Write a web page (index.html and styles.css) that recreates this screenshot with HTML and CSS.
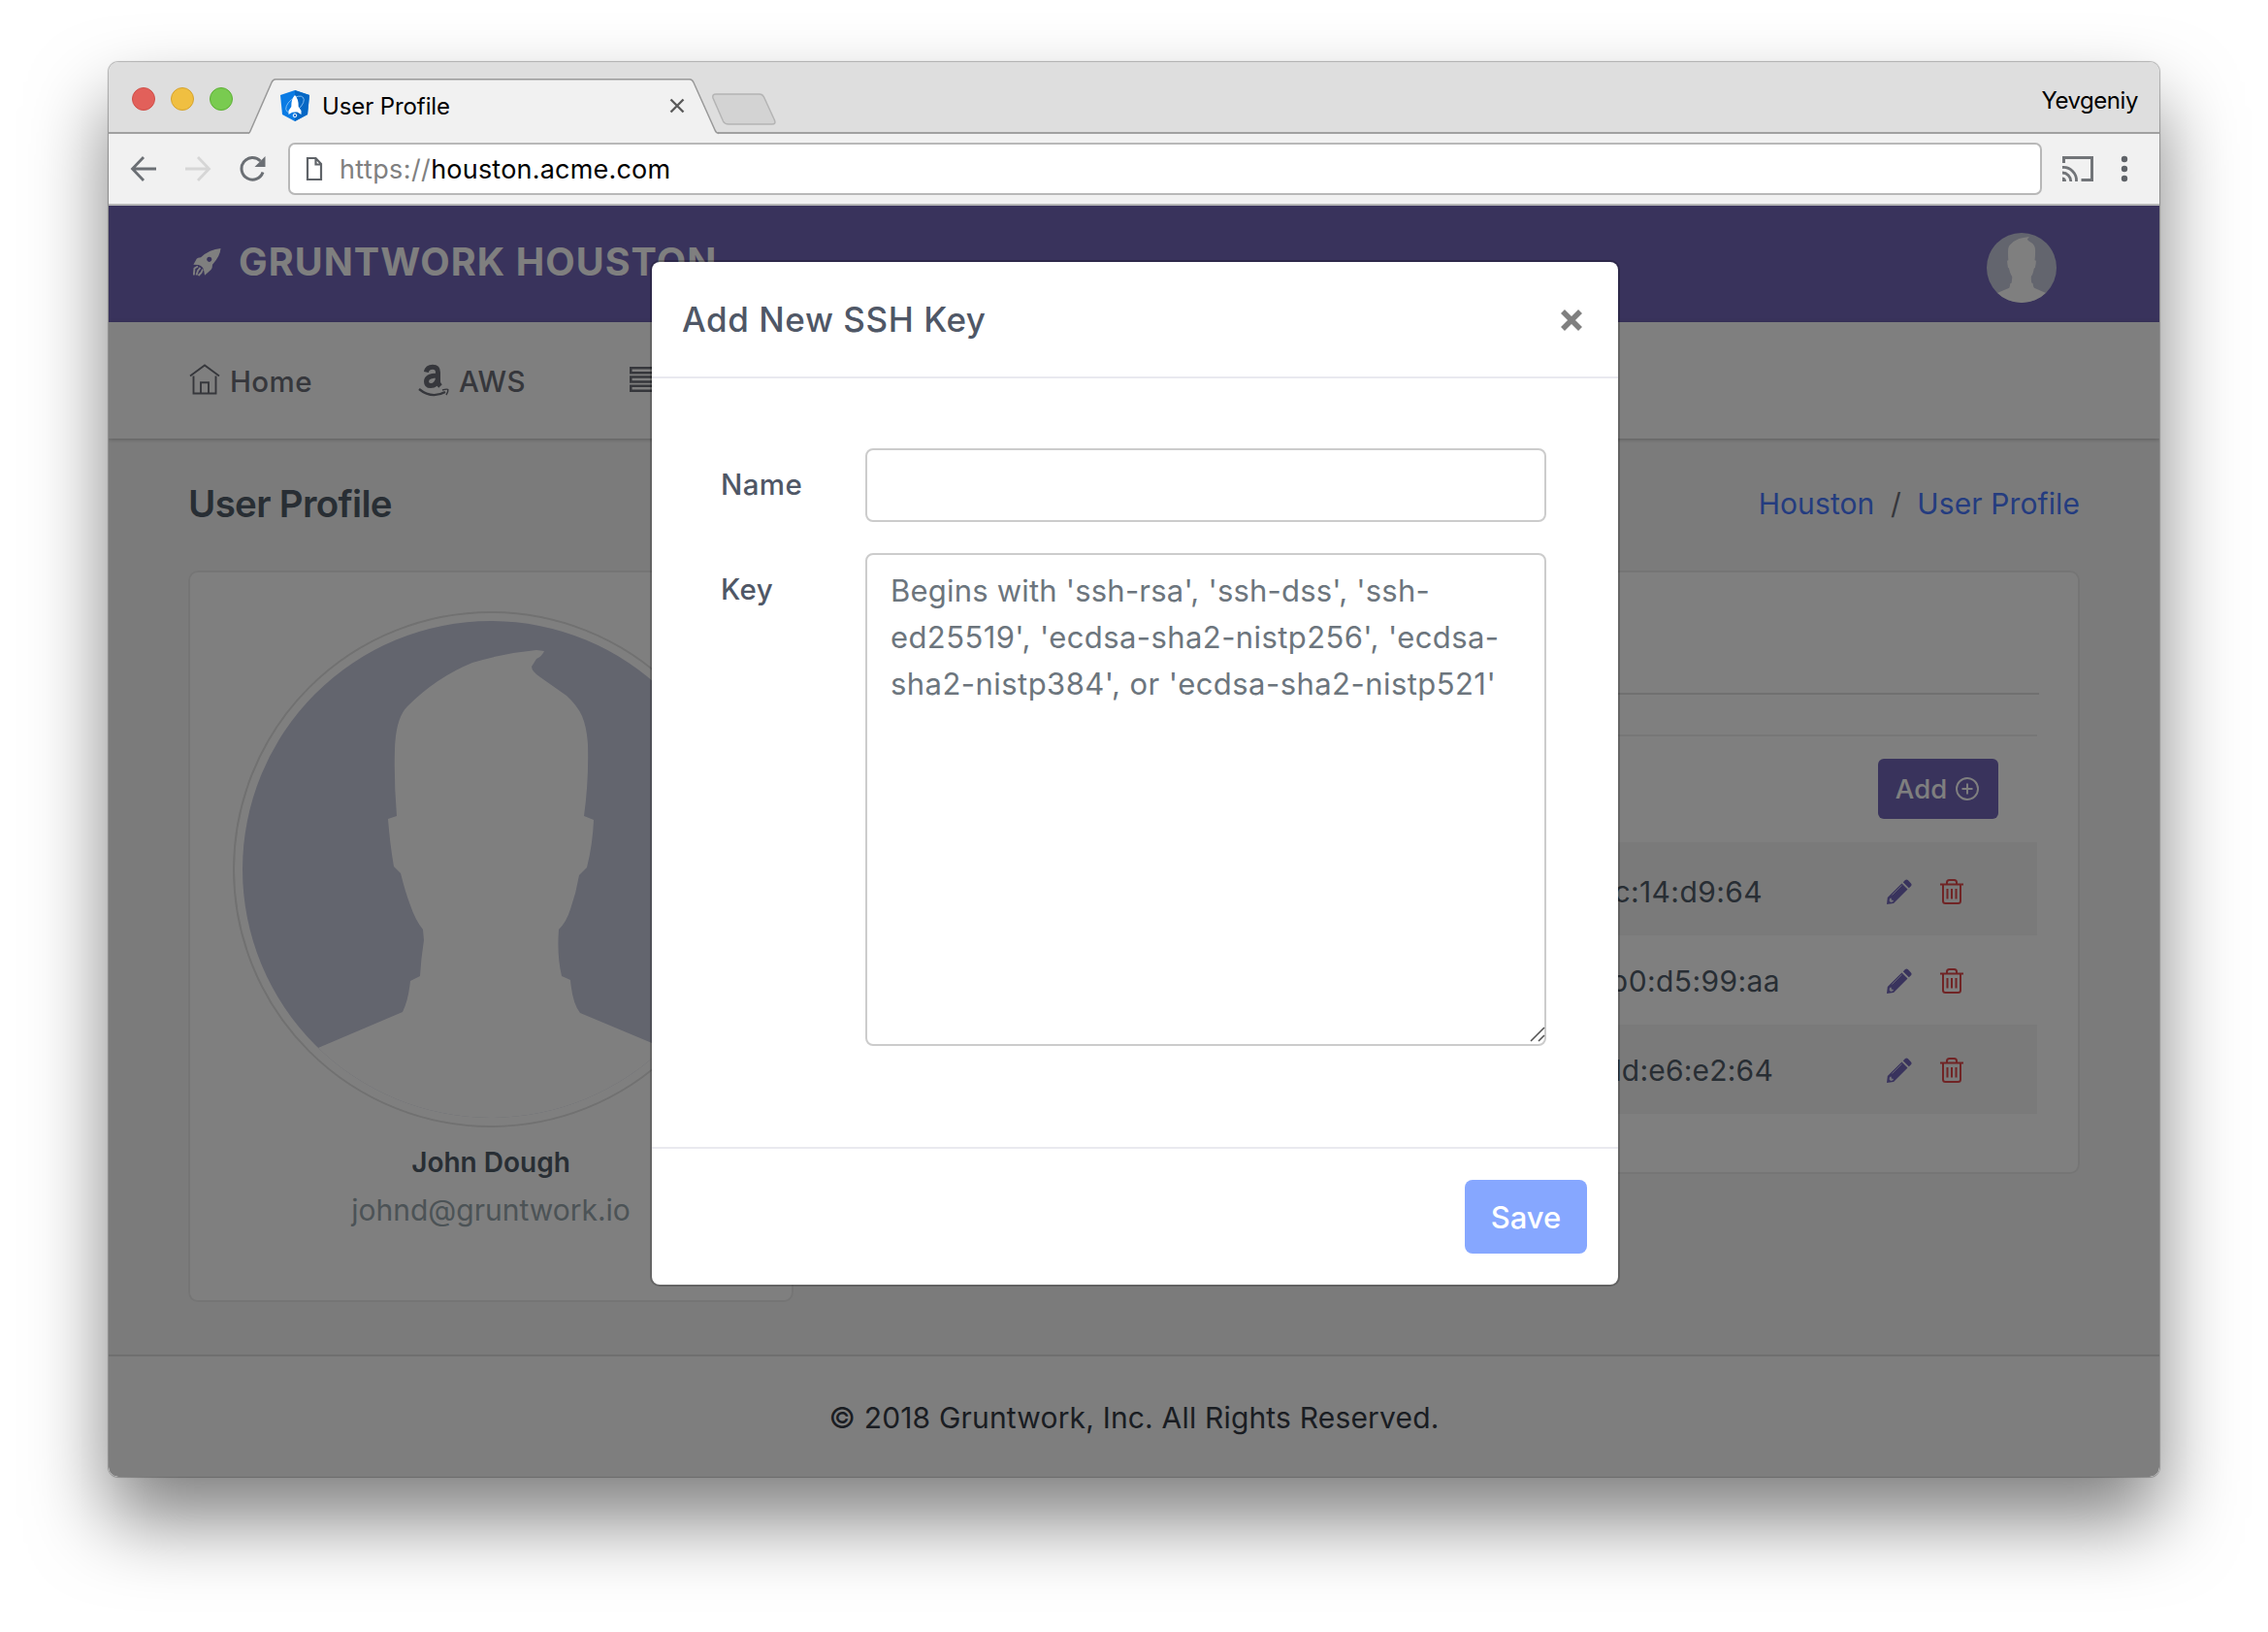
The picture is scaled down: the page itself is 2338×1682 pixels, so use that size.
FILE: index.html
```html
<!DOCTYPE html>
<html lang="en">
<head>
<meta charset="utf-8">
<title>User Profile</title>
<link rel="stylesheet" href="styles.css">
</head>
<body>
<svg class="defs" width="0" height="0" aria-hidden="true">
  <symbol id="person" viewBox="0 0 512 512">
    <rect width="512" height="512" fill="#c7cadd"/>
    <path fill="#fff" d="M303 30 L311 31 Q309 36 303 39 L298 47 Q298 52 307 58 L334 77 Q345 87 350 98 Q355 110 356 128 Q357 165 352 201 L362 205 Q361 230 355 254 L347 262 Q344 280 338 297 Q334 310 326 318 Q324 345 329 366 L338 370 Q340 394 348 404 L434 440 L512 470 V512 H0 V470 L78 440 L165 403 Q171 391 173 371 L183 366 Q184 348 187 329 L186 318 Q178 308 173 293 Q168 280 163 260 L156 253 Q152 230 150 204 L159 201 Q156 165 157 132 Q158 100 170 88 Q200 58 237 43 Q270 33 303 30Z"/>
  </symbol>
  <symbol id="pencil" viewBox="0 0 26 26">
    <path fill="#7266ba" d="M16.8 3.2 19 1Q20.4-.2 21.8 1.1L25 4.4Q26.2 5.9 25 7.2L22.800 9.300Z M15.500 4.500 21.500 10.500 7 25 0 26 .8 19Z"/>
    <path d="M5.500 16.500 15.500 6.500" stroke="#fff" stroke-width="1" opacity=".6"/>
    <path fill="#fff" opacity=".8" d="M3 20 L4.500 19.500 5 21.500 7 22 6.300 23.600 4 24 2.600 22.500Z"/>
  </symbol>
  <symbol id="trash" viewBox="0 0 24 26">
    <path fill="none" stroke="#e0484b" stroke-width="2" d="M0 5.500H24M7 6V3.500Q7 1 9.500 1H14.500Q17 1 17 3.500V6M3 6V22.500Q3 25 5.500 25H18.500Q21 25 21 22.500V6M7.500 10V20.500M12 10V20.500M16.500 10V20.500"/>
  </symbol>
</svg>

<div class="window">
  <div class="tabstrip">
    <div class="lights"><i class="light red"></i><i class="light yellow"></i><i class="light green"></i></div>
    <div class="tab">
      <svg class="tab-shape" width="486" height="58" viewBox="0 0 486 58"><path d="M0 56.500 Q1.500 56 2.500 53 L24 4 Q25.500 .8 28 .8 H455 Q457.500 .8 459 4 L481 53 Q482 56 485 56.500 V58 H0Z" fill="#f1f1f1"/><path d="M0 56.500 Q1.500 56 2.500 53 L24 4 Q25.500 .8 28 .8 H455 Q457.500 .8 459 4 L481 53 Q482 56 485 56.500" fill="none" stroke="#999" stroke-width="1.500"/></svg>
      <svg class="favicon" width="30" height="32" viewBox="0 0 30 32"><path fill="#0a7be4" d="M15 0 30 5 28 25 15 32 2 25 0 5Z"/><path fill="#0567c4" d="M15 0 30 5 28 25 15 32Z"/><ellipse cx="15" cy="14.500" rx="11" ry="6" fill="none" stroke="#8ec4f5" stroke-width=".8" transform="rotate(-40 15 14.500)"/><path fill="#fff" d="M15 5Q19 9 18.700 17L21.500 21V25L17.500 22.500H12.500L8.500 25V21L11.300 17Q11 9 15 5Z"/><circle cx="15" cy="26" r="1.800" fill="none" stroke="#fff"/></svg>
      <span class="tab-title">User Profile</span>
      <svg class="tab-close" width="16" height="16" viewBox="0 0 16 16"><path d="M1.500 1.500 14.500 14.500M14.500 1.500 1.500 14.500" stroke="#5a5a5a" stroke-width="2.400"/></svg>
    </div>
    <svg class="newtab" width="68" height="33" viewBox="0 0 68 33"><path d="M5 1H50Q53 1 54.500 4L65.500 28Q67 32 63 32H18Q14 32 12.500 29L2 5Q1 1 5 1Z" fill="#d3d3d3" stroke="#b4b4b4" stroke-width="1.500"/></svg>
    <span class="user">Yevgeniy</span>
  </div>
  <div class="toolbar">
    <svg class="i-back" width="28" height="28" viewBox="0 0 28 28"><path d="M27 14H3M14 2 2.500 14 14 26" fill="none" stroke="#6b6f74" stroke-width="2.800"/></svg>
    <svg class="i-fwd" width="28" height="28" viewBox="0 0 28 28"><path d="M1 14H25M14 2 25.500 14 14 26" fill="none" stroke="#d6d6d6" stroke-width="2.800"/></svg>
    <svg class="i-reload" width="28" height="28" viewBox="0 0 28 28"><path d="M22.500 6A11.300 11.300 0 1 0 25 17.500" fill="none" stroke="#6b6f74" stroke-width="3"/><path d="M27.500 1V12H16.500Z" fill="#6b6f74"/></svg>
    <div class="address">
      <svg width="18" height="26" viewBox="0 0 18 26"><path d="M2 2H10.500L16 8V24H2ZM10.500 2V8.500H16" fill="none" stroke="#5f6368" stroke-width="2.200"/></svg>
      <span class="url"><span class="scheme">https://</span><span>houston.acme.com</span></span>
    </div>
    <svg class="i-cast" width="34" height="28" viewBox="0 0 34 28"><path d="M2.500 8V2.500H31.500V25.500H20.500" fill="none" stroke="#717478" stroke-width="3"/><path d="M1 12.500A13.500 13.500 0 0 1 15.500 27M1 18A9 9 0 0 1 9.800 27" fill="none" stroke="#717478" stroke-width="2.800"/><path d="M1 22.500A4.500 4.500 0 0 1 5 27H1Z" fill="#717478"/></svg>
    <svg class="i-dots" width="8" height="28" viewBox="0 0 8 28" fill="#5f6368"><circle cx="4" cy="4" r="3.200"/><circle cx="4" cy="14" r="3.200"/><circle cx="4" cy="24" r="3.200"/></svg>
  </div>

  <div class="page">
    <header class="brandbar">
      <svg class="rocket" width="29" height="29" viewBox="0 0 29 29"><path fill="#fff" fill-rule="evenodd" d="M28.500 0Q28 8 20 16.700Q20 20.500 18.500 22L12 27.800 11.300 23.500Q11 18.500 5.500 17L.4 16.700 3.700 10.700Q4.500 9.500 8 9.200Q17 1 28.500 0ZM16.700 8.700a2.600 2.600 0 1 0 .1 0Z"/><path d="M5 18.500 1.500 20.500 .8 27.500M7.500 19.800 5 23 3.500 27.500M10 21.500 8.500 25 5.500 28" fill="none" stroke="#fff" stroke-width="1.900"/></svg>
      <span class="brand">GRUNTWORK HOUSTON</span>
      <svg class="avatar-sm" width="72" height="72"><use href="#person"/></svg>
    </header>
    <nav class="nav">
      <a class="nav-item home"><svg width="32" height="32" viewBox="0 0 32 32"><path d="M1 12.500 16 1.500 31 12.500M4.500 12.500V30.500H27.500V12.500M12 30V19.300H20V30" fill="none" stroke="#6c6f78" stroke-width="1.900"/></svg><span>Home</span></a>
      <a class="nav-item aws"><svg width="32" height="34" viewBox="0 0 32 34"><path fill="none" stroke="#6c6f78" stroke-width="5" d="M8.300 8.500Q9.500 3.300 15 3.300Q20.500 3.300 20.500 9V18.500Q20.500 20.500 23 23M20.500 12Q8.500 12 8.500 18.200Q8.500 22.500 13 22.500Q19 22.500 20.500 15"/><path fill="none" stroke="#6c6f78" stroke-width="2.300" d="M1 26Q14 36.500 28 29"/><path fill="none" stroke="#6c6f78" stroke-width="1.500" d="M25 27Q30 25.500 30.800 26.500Q31.200 28.500 29 32"/></svg><span>AWS</span></a>
      <a class="nav-item servers"><svg width="34" height="26" viewBox="0 0 34 26"><path d="M1.300 1.300H32.700V6.200H1.300ZM1.300 10.500H32.700V15.500H1.300ZM1.300 19.800H32.700V24.700H1.300Z" fill="none" stroke="#6c6f78" stroke-width="2.500"/></svg></a>
    </nav>
    <main class="content">
      <div class="titlebar">
        <h1>User Profile</h1>
        <div class="crumbs"><a>Houston</a><span class="slash">/</span><a>User Profile</a></div>
      </div>
      <div class="columns">
        <section class="card profile">
          <div class="portrait"><svg width="512" height="512"><use href="#person"/></svg></div>
          <div class="fullname">John Dough</div>
          <div class="email">johnd@gruntwork.io</div>
        </section>
        <section class="card keys">
          <div class="tabs-line"></div>
          <div class="add-row"><button class="add"><span>Add</span><svg width="24" height="24" viewBox="0 0 24 24"><path d="M12 1A11 11 0 1 0 12 23A11 11 0 1 0 12 1ZM12 6.500V17.500M6.500 12H17.500" fill="none" stroke="#fff" stroke-width="1.900"/></svg></button></div>
          <div class="key-row first"><span class="print p1">c:14:d9:64</span><svg class="edit" width="26" height="26"><use href="#pencil"/></svg><svg width="24" height="26"><use href="#trash"/></svg></div>
          <div class="key-row"><span class="print p2">b0:d5:99:aa</span><svg class="edit" width="26" height="26"><use href="#pencil"/></svg><svg width="24" height="26"><use href="#trash"/></svg></div>
          <div class="key-row odd"><span class="print p3">dd:e6:e2:64</span><svg class="edit" width="26" height="26"><use href="#pencil"/></svg><svg width="24" height="26"><use href="#trash"/></svg></div>
        </section>
      </div>
    </main>
    <footer class="footer">© 2018 Gruntwork, Inc. All Rights Reserved.</footer>

    <div class="backdrop"></div>
    <div class="modal">
      <div class="modal-head"><h2>Add New SSH Key</h2><svg width="24" height="24" viewBox="0 0 24 24"><path d="M3 3 21 21M21 3 3 21" stroke="#808080" stroke-width="5.600"/></svg></div>
      <div class="modal-body">
        <label>Name</label>
        <div class="input"></div>
        <label>Key</label>
        <div class="textarea"><span class="hint-1">Begins with 'ssh-rsa', 'ssh-dss', 'ssh-</span><br><span class="hint-2">ed25519', 'ecdsa-sha2-nistp256', 'ecdsa-</span><br><span class="hint-3">sha2-nistp384', or 'ecdsa-sha2-nistp521'</span>
          <svg class="grip" width="16" height="16" viewBox="0 0 16 16"><path d="M1 15 15 1M9 15 15 9" stroke="#555" stroke-width="1.600"/></svg>
        </div>
      </div>
      <div class="modal-foot"><button class="save">Save</button></div>
    </div>
  </div>
</div>
</body>
</html>
```
FILE: styles.css
```css
* { box-sizing: border-box; }
body {
  margin: 0;
  padding: 64px 112px 160px;
  background: #fff;
  font-family: Inter, "Liberation Sans", sans-serif;
  font-size: 30px;
  color: #515c69;
}
svg { display: block; flex: none; }
.defs { position: absolute; }
h1, h2 { margin: 0; }
button { border: 0; font-family: inherit; color: #fff; }

.window {
  width: 2114px;
  height: 1458px;
  border-radius: 10px;
  overflow: hidden;
  display: flex;
  flex-direction: column;
  box-shadow: 0 0 1px 1px rgba(0, 0, 0, .28), 0 44px 80px rgba(0, 0, 0, .5);
}

/* Browser chrome */
.tabstrip {
  height: 74px;
  flex: none;
  display: flex;
  align-items: flex-end;
  background: #dedede;
  border-bottom: 2px solid #a0a0a0;
}
.lights { display: flex; gap: 16px; padding: 0 0 22px 24px; width: 144px; flex: none; }
.light { width: 24px; height: 24px; border-radius: 50%; border: 1px solid; }
.red { background: #e2605a; border-color: #cf4f49; }
.yellow { background: #f0bf41; border-color: #d5a32f; }
.green { background: #79cb50; border-color: #5eb036; }
.tab {
  position: relative;
  width: 486px;
  height: 57px;
  flex: none;
  display: flex;
  align-items: center;
  padding: 0 36px 1px 33px;
  margin-bottom: -2px;
}
.tab-shape { position: absolute; left: 0; top: 0; }
.favicon, .tab-title, .tab-close { position: relative; }
.tab-title { margin-left: 13px; flex: 1; font-size: 24px; letter-spacing: -.1px; color: #000; white-space: nowrap; }
.newtab { margin: 0 0 7px -9px; }
.user { margin: 0 22px 18px auto; font-size: 24px; line-height: 28px; letter-spacing: -.45px; color: #000; }
.toolbar {
  height: 74px;
  flex: none;
  display: flex;
  align-items: center;
  background: #f1f1f1;
  border-bottom: 2px solid #b5b5b5;
  padding-left: 22px;
}
.i-fwd { margin-left: 28px; }
.i-reload { margin-left: 28px; }
.address {
  width: 1808px;
  height: 54px;
  margin-left: 23px;
  padding-left: 16px;
  display: flex;
  align-items: center;
  background: #fff;
  border: 2px solid #b8b8b8;
  border-radius: 7px;
}
.url { margin-left: 17px; padding-top: 1px; font-size: 27px; letter-spacing: .2px; color: #000; white-space: nowrap; }
.scheme { color: #808080; letter-spacing: .4px; }
.i-cast { margin-left: 20px; }
.i-dots { margin-left: 27px; }

/* Application page */
.page {
  position: relative;
  flex: 1;
  display: flex;
  flex-direction: column;
  background: #f7f7f7;
}
.brandbar {
  height: 120px;
  display: flex;
  align-items: center;
  padding: 0 106px 0 87px;
  background: #7266b8;
}
.rocket { margin-bottom: 4px; }
.brand { margin: 0 auto 5px 18px; font-size: 39.500px; font-weight: 700; letter-spacing: 1.050px; color: #fff; white-space: nowrap; }
.avatar-sm { border-radius: 50%; margin-top: 8px; }
.nav {
  height: 120px;
  display: flex;
  align-items: center;
  padding-left: 83px;
  background: #fff;
  box-shadow: 0 1px 4px rgba(0, 0, 0, .25);
}
.nav-item { display: flex; align-items: center; font-size: 29.500px; letter-spacing: .4px; font-weight: 500; color: #6c6f78; }
.nav-item span { margin-left: 10px; padding-top: 1px; }
.nav-item svg { margin-bottom: 2px; }
.nav-item.aws svg { margin-bottom: 0; }
.home { width: 236px; }
.aws { width: 218px; }
.content { padding: 0 82px; flex: 1; }
.titlebar { height: 136px; display: flex; align-items: center; justify-content: space-between; padding-bottom: 2px; }
h1 { font-size: 38.500px; font-weight: 600; letter-spacing: -.68px; color: #515c68; }
.crumbs { display: flex; font-size: 30px; letter-spacing: .1px; color: #4879ff; }
.slash { margin: 0 16.500px; color: #6c6f78; }
.columns { display: flex; gap: 60px; align-items: flex-start; }
.card { background: #fff; border: 2px solid #ebebeb; border-radius: 10px; }
.profile {
  width: 624px;
  height: 754px;
  padding-top: 40px;
  display: flex;
  flex-direction: column;
  align-items: center;
}
.portrait { padding: 8px; border: 2px solid #e2e2e2; border-radius: 50%; }
.portrait svg { border-radius: 50%; }
.fullname { margin-top: 18px; line-height: 36px; font-size: 28px; font-weight: 600; }
.email { margin-top: 12px; line-height: 38px; color: #98a6ad; }
.keys { flex: 1; height: 622px; padding: 124px 40px 0; }
.tabs-line { height: 2px; background: #e0e0e0; }
.add-row { margin: 41px 2px 0 0; height: 111px; border-top: 2px solid #eee; padding: 23px 40px 0; display: flex; justify-content: flex-end; }
.add {
  width: 124px;
  height: 62px;
  padding: 0 7px 0 5px;
  border-radius: 6px;
  background: #7266b8;
  display: flex;
  align-items: center;
  justify-content: center;
  gap: 9px;
  font-size: 27.500px;
  font-weight: 500;
}
.key-row { height: 92px; margin-right: 2px; padding: 2px 76px 0 0; display: flex; align-items: center; justify-content: flex-end; color: #515c69; }
.key-row.first { height: 96px; padding-top: 6px; }
.first, .odd { background: #f5f5f5; }
.edit { margin-right: 29px; }
.print { white-space: nowrap; letter-spacing: .4px; }
.p1 { margin-right: 128px; }
.p2 { margin-right: 110px; }
.p3 { margin-right: 117px; letter-spacing: .2px; }
.footer {
  height: 126px;
  padding-top: 1px;
  border-top: 2px solid #dedede;
  background: #fcfcfc;
  color: #343a45;
  letter-spacing: .18px;
  display: flex;
  align-items: center;
  justify-content: center;
}

/* Dialog */
.backdrop { position: absolute; inset: 0; background: rgba(0, 0, 0, .5); }
.modal {
  position: absolute;
  left: 558px;
  top: 56px;
  width: 1000px;
  height: 1058px;
  background: #fff;
  background-clip: padding-box;
  border: 2px solid rgba(0, 0, 0, .2);
  border-radius: 10px;
}
.modal-head {
  height: 120px;
  display: flex;
  align-items: center;
  justify-content: space-between;
  padding: 0 36px 0 31px;
  border-bottom: 2px solid #e9e9ef;
}
.modal-head svg { margin-top: 2px; }
h2 { font-size: 35px; font-weight: 500; letter-spacing: .55px; color: #4f5766; }
.modal-body {
  height: 792px;
  padding: 72px 74px 0 72px;
  display: grid;
  grid-template-columns: 148px 702px;
  grid-template-rows: 76px 508px;
  row-gap: 32px;
}
label { line-height: 74px; font-size: 29.500px; font-weight: 500; letter-spacing: .4px; margin-left: -1px; color: #4f5766; }
.input, .textarea { border: 2px solid #ccc; border-radius: 8px; }
.textarea { position: relative; padding: 13px 24px; font-size: 31px; line-height: 48px; color: #6c757d; white-space: nowrap; }
.hint-1 { letter-spacing: .2px; }
.hint-2 { letter-spacing: .41px; }
.hint-3 { letter-spacing: .45px; }
.grip { position: absolute; right: -1px; bottom: 2px; }
.modal-foot { padding: 32px; border-top: 2px solid #e9e9ef; display: flex; justify-content: flex-end; }
.save { width: 126px; height: 76px; border-radius: 8px; background: #86a7ff; font-size: 31px; font-weight: 500; }
```
